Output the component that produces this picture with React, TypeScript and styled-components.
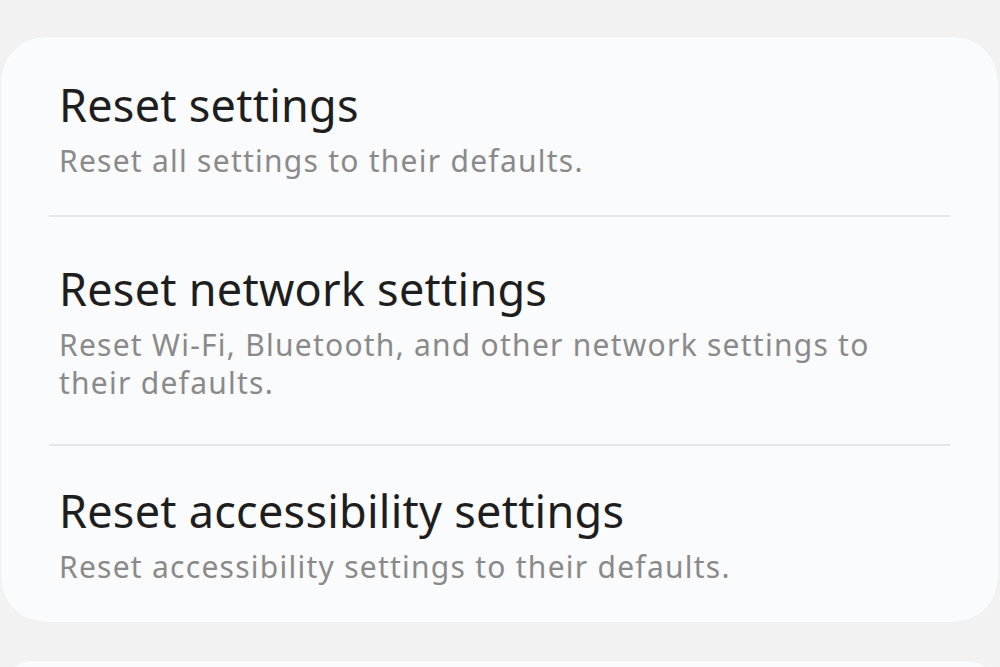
import React from 'react';
import styled, { createGlobalStyle } from 'styled-components';

const GlobalStyle = createGlobalStyle`
  html, body {
    margin: 0;
    padding: 0;
    background: #f2f2f2;
  }
  body {
    font-family: "Noto Sans", "Open Sans", sans-serif;
  }
`;

const Page = styled.div`
  width: 1000px;
  height: 667px;
  overflow: hidden;
  padding-top: 37px;
  box-sizing: border-box;
  display: flex;
  flex-direction: column;
  gap: 39px;
`;

const Card = styled.div<{ $height?: number }>`
  margin: 0 2px 0 1px;
  background: #fafbfc;
  border-radius: 44px;
  box-shadow: 0 0 1px rgba(0, 0, 0, 0.08);
  display: flex;
  flex-direction: column;
  padding: 0 48px;
  flex-shrink: 0;
  ${(p) => (p.$height ? `height: ${p.$height}px;` : '')}
`;

const Item = styled.div<{ $top: number; $bottom: number }>`
  padding: ${(p) => p.$top}px 50px ${(p) => p.$bottom}px 10px;
  display: flex;
  flex-direction: column;
`;

const Title = styled.div`
  font-size: 45px;
  line-height: 52px;
  color: #1e1e1e;
  letter-spacing: 0.25px;
`;

const Subtitle = styled.div`
  margin-top: 11px;
  font-size: 30px;
  line-height: 38px;
  color: #8a8a8a;
  letter-spacing: 1.25px;
`;

const Divider = styled.div`
  height: 2px;
  background: #e6e6e6;
`;

const items = [
  {
    title: 'Reset settings',
    sub: 'Reset all settings to their defaults.',
    top: 42,
    bottom: 35,
  },
  {
    title: 'Reset network settings',
    sub: 'Reset Wi-Fi, Bluetooth, and other network settings to their defaults.',
    top: 46,
    bottom: 42,
  },
  {
    title: 'Reset accessibility settings',
    sub: 'Reset accessibility settings to their defaults.',
    top: 39,
    bottom: 36,
  },
];

function App() {
  return (
    <>
      <GlobalStyle />
      <Page>
        <Card>
          {items.map((it, i) => (
            <React.Fragment key={it.title}>
              {i > 0 && <Divider />}
              <Item $top={it.top} $bottom={it.bottom}>
                <Title>{it.title}</Title>
                <Subtitle>{it.sub}</Subtitle>
              </Item>
            </React.Fragment>
          ))}
        </Card>
        <Card $height={60} />
      </Page>
    </>
  );
}

export default App;
